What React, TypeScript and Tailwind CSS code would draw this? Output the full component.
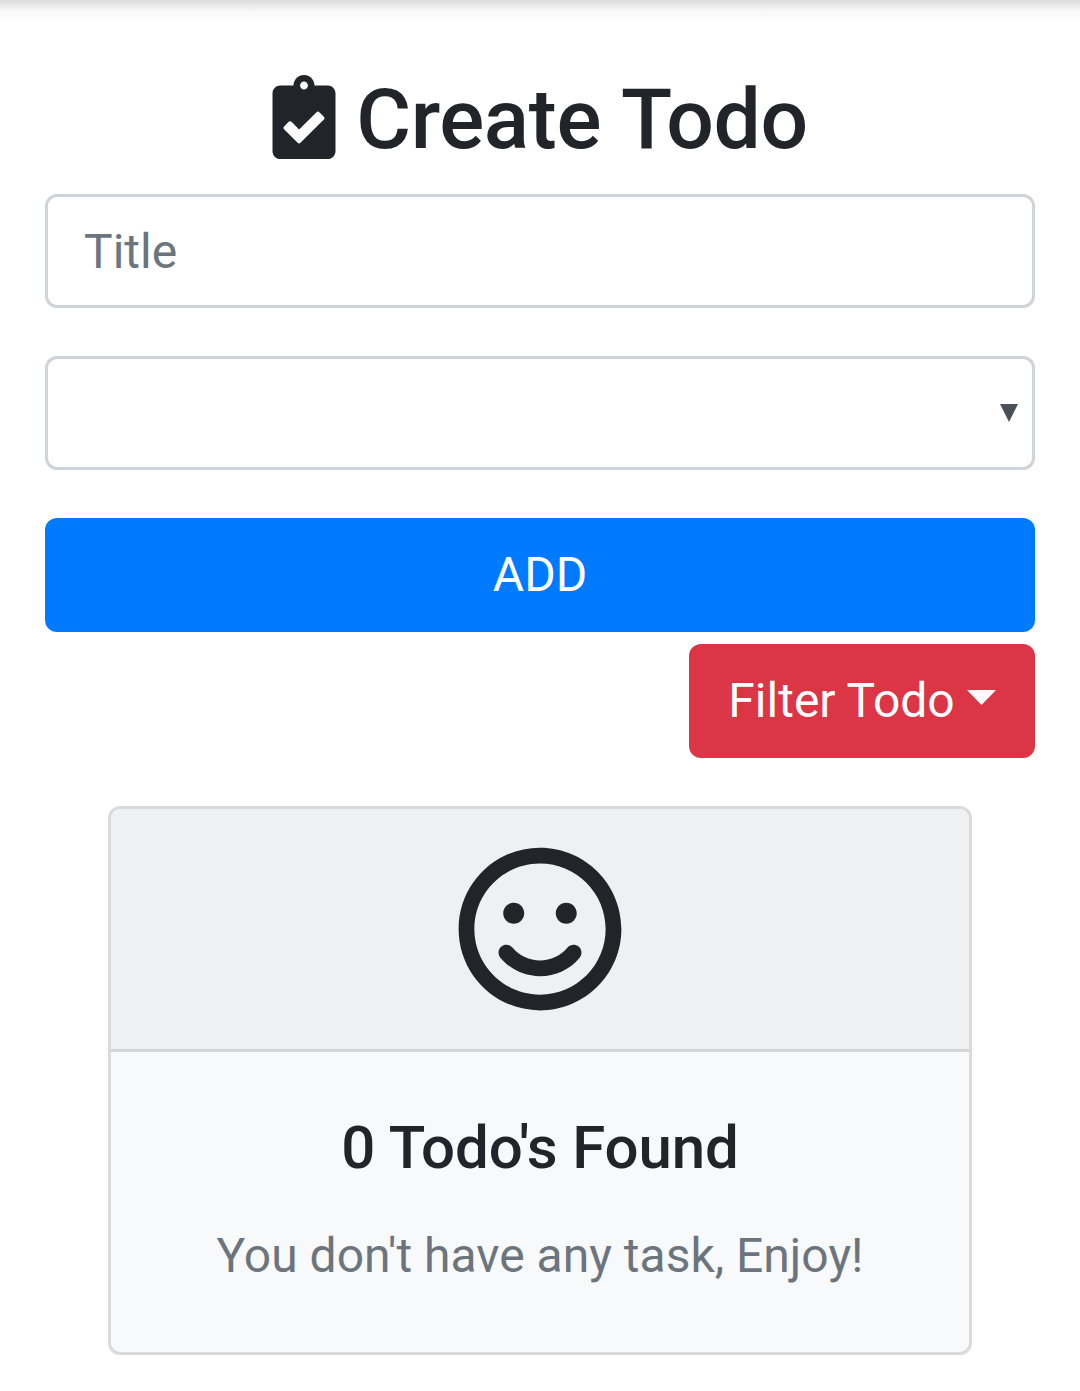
import { FaClipboardCheck, FaRegSmile } from "react-icons/fa";

export default function App() {
  return (
    <main className="h-[1391px] overflow-hidden bg-white font-[Roboto,sans-serif] text-[48px] leading-[72px] text-[#212529]">
      <div className="h-6 bg-linear-to-b from-[#dcdcdc] via-[#f7f7f7] via-45% to-white to-90%" />
      <div className="px-[45px] pt-[45px]">
        <h1 className="flex h-[101px] items-center justify-center gap-[20px] text-[84px] leading-[101px] font-medium tracking-[-0.35px] [word-spacing:1.5px]">
          <FaClipboardCheck className="mb-[6px] h-[84px] w-[64px] shrink-0" />
          <span className="whitespace-nowrap">Create Todo</span>
        </h1>
        <input
          placeholder="Title"
          aria-label="Title"
          className="mt-6 block h-[114px] w-full rounded-[12px] border-[3px] border-[#ced4da] px-9 placeholder:text-[#6c757d] placeholder:opacity-100"
        />
        <button
          aria-label="Todo type"
          className="mt-12 flex h-[114px] w-full items-center justify-end rounded-[12px] border-[3px] border-[#ced4da] pr-[14px]"
        >
          <svg viewBox="0 0 18 18" className="h-[18px] w-[18px] fill-[#495057]">
            <path d="M0 0H18L9 18Z" />
          </svg>
        </button>
        <button className="mt-12 block h-[114px] w-full rounded-[12px] bg-[#007bff] text-white">ADD</button>
        <div className="mt-3 flex justify-end">
          <button className="flex h-[114px] w-[346px] items-center justify-center gap-3 rounded-[12px] bg-[#dc3545] whitespace-nowrap text-white">
            Filter Todo
            <svg viewBox="0 0 29 15" className="mb-2 h-[15px] w-[29px] fill-white">
              <path d="M0 0H29L14.5 15Z" />
            </svg>
          </button>
        </div>
        <section className="mx-auto mt-12 h-[549px] w-[864px] overflow-hidden rounded-[12px] border-[3px] border-[#d9dadb] bg-[#f8f9fa] text-center">
          <div className="flex h-[243px] items-center justify-center border-b-[3px] border-[#d2d4d5] bg-[#eff0f2]">
            <FaRegSmile className="h-[168px] w-[168px]" />
          </div>
          <h2 className="mt-[60px] text-[60px] leading-[72px] font-medium tracking-[-0.12px]">0 Todo's Found</h2>
          <p className="mt-9 text-[#6c757d]">You don't have any task, Enjoy!</p>
        </section>
      </div>
    </main>
  );
}
